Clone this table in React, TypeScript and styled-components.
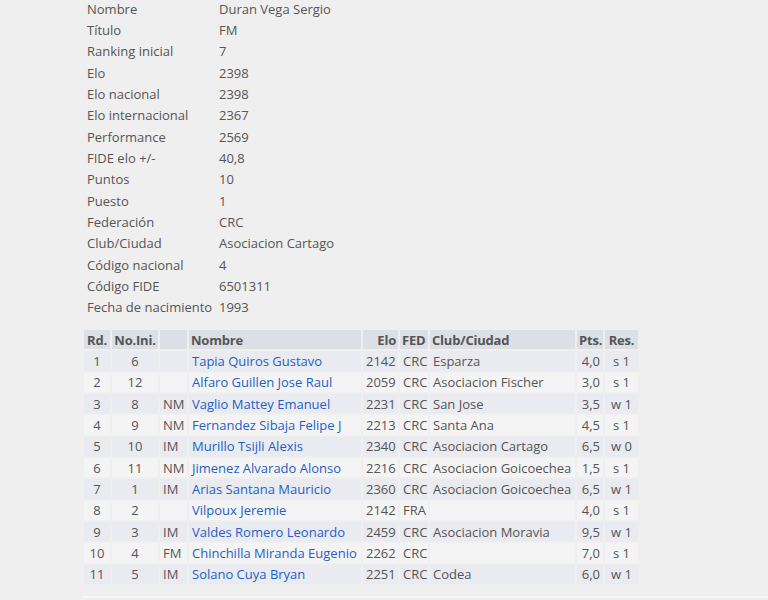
import { createGlobalStyle, styled } from "styled-components";

const GlobalStyle = createGlobalStyle`
  html, body {
    margin: 0;
    padding: 0;
    background: #efefef;
  }
  body {
    font-family: "Open Sans", "Liberation Sans", sans-serif;
    font-size: 13px;
    color: #555;
  }
`;

interface Info {
  label: string;
  value: string;
}

interface Game {
  rd: number;
  sno: number;
  title: string;
  name: string;
  elo: number;
  fed: string;
  club: string;
  pts: string;
  res: string;
}

type Align = "left" | "center" | "right";

interface Column {
  label: string;
  width: number;
  align: Align;
}

const info: Info[] = [
  { label: "Nombre", value: "Duran Vega Sergio" },
  { label: "Título", value: "FM" },
  { label: "Ranking inicial", value: "7" },
  { label: "Elo", value: "2398" },
  { label: "Elo nacional", value: "2398" },
  { label: "Elo internacional", value: "2367" },
  { label: "Performance", value: "2569" },
  { label: "FIDE elo +/-", value: "40,8" },
  { label: "Puntos", value: "10" },
  { label: "Puesto", value: "1" },
  { label: "Federación", value: "CRC" },
  { label: "Club/Ciudad", value: "Asociacion Cartago" },
  { label: "Código nacional", value: "4" },
  { label: "Código FIDE", value: "6501311" },
  { label: "Fecha de nacimiento", value: "1993" },
];

const columns: Column[] = [
  { label: "Rd.", width: 26, align: "center" },
  { label: "No.Ini.", width: 46, align: "center" },
  { label: "", width: 27, align: "left" },
  { label: "Nombre", width: 172, align: "left" },
  { label: "Elo", width: 35, align: "right" },
  { label: "FED", width: 28, align: "left" },
  { label: "Club/Ciudad", width: 145, align: "left" },
  { label: "Pts.", width: 26, align: "right" },
  { label: "Res.", width: 33, align: "center" },
];

const games: Game[] = [
  { rd: 1, sno: 6, title: "", name: "Tapia Quiros Gustavo", elo: 2142, fed: "CRC", club: "Esparza", pts: "4,0", res: "s 1" },
  { rd: 2, sno: 12, title: "", name: "Alfaro Guillen Jose Raul", elo: 2059, fed: "CRC", club: "Asociacion Fischer", pts: "3,0", res: "s 1" },
  { rd: 3, sno: 8, title: "NM", name: "Vaglio Mattey Emanuel", elo: 2231, fed: "CRC", club: "San Jose", pts: "3,5", res: "w 1" },
  { rd: 4, sno: 9, title: "NM", name: "Fernandez Sibaja Felipe J", elo: 2213, fed: "CRC", club: "Santa Ana", pts: "4,5", res: "s 1" },
  { rd: 5, sno: 10, title: "IM", name: "Murillo Tsijli Alexis", elo: 2340, fed: "CRC", club: "Asociacion Cartago", pts: "6,5", res: "w 0" },
  { rd: 6, sno: 11, title: "NM", name: "Jimenez Alvarado Alonso", elo: 2216, fed: "CRC", club: "Asociacion Goicoechea", pts: "1,5", res: "s 1" },
  { rd: 7, sno: 1, title: "IM", name: "Arias Santana Mauricio", elo: 2360, fed: "CRC", club: "Asociacion Goicoechea", pts: "6,5", res: "w 1" },
  { rd: 8, sno: 2, title: "", name: "Vilpoux Jeremie", elo: 2142, fed: "FRA", club: "", pts: "4,0", res: "s 1" },
  { rd: 9, sno: 3, title: "IM", name: "Valdes Romero Leonardo", elo: 2459, fed: "CRC", club: "Asociacion Moravia", pts: "9,5", res: "w 1" },
  { rd: 10, sno: 4, title: "FM", name: "Chinchilla Miranda Eugenio", elo: 2262, fed: "CRC", club: "", pts: "7,0", res: "s 1" },
  { rd: 11, sno: 5, title: "IM", name: "Solano Cuya Bryan", elo: 2251, fed: "CRC", club: "Codea", pts: "6,0", res: "w 1" },
];

const App = () => {
  return (
    <Page>
      <GlobalStyle />
      <InfoTable>
        <tbody>
          {info.map((row) => (
            <tr key={row.label}>
              <InfoLabel>{row.label}</InfoLabel>
              <InfoValue>{row.value}</InfoValue>
            </tr>
          ))}
        </tbody>
      </InfoTable>

      <GamesTable>
        <colgroup>
          {columns.map((c, i) => (
            <col key={i} style={{ width: c.width }} />
          ))}
        </colgroup>
        <thead>
          <tr>
            {columns.map((c, i) => (
              <Th key={i} $align={c.align}>
                {c.label}
              </Th>
            ))}
          </tr>
        </thead>
        <tbody>
          {games.map((g, i) => (
            <Row key={g.rd} $odd={i % 2 === 0}>
              <Td $align="center">{g.rd}</Td>
              <Td $align="center">{g.sno}</Td>
              <Td $align="left">{g.title}</Td>
              <Td $align="left">
                <PlayerLink href="#">{g.name}</PlayerLink>
              </Td>
              <Td $align="right">{g.elo}</Td>
              <Td $align="left">{g.fed}</Td>
              <Td $align="left">{g.club}</Td>
              <Td $align="right">{g.pts}</Td>
              <Td $align="center">{g.res}</Td>
            </Row>
          ))}
        </tbody>
      </GamesTable>
      <Footer />
    </Page>
  );
};

export default App;

const Page = styled.div`
  width: 768px;
  height: 600px;
  overflow: hidden;
  padding-left: 84px;
  box-sizing: border-box;
  margin-top: -2px;
`;

const InfoTable = styled.table`
  border-collapse: collapse;
  margin-bottom: 10px;

  td {
    height: 21.33px;
    padding: 0 3px;
    white-space: nowrap;
    vertical-align: middle;
  }
`;

const InfoLabel = styled.td`
  width: 126px;
`;

const InfoValue = styled.td``;

const GamesTable = styled.table`
  border-collapse: separate;
  border-spacing: 2px;
  table-layout: fixed;
  width: 558px;
  margin-left: -2px;
`;

const Th = styled.th<{ $align: Align }>`
  background: #dcdfe6;
  color: #555;
  font-weight: 700;
  letter-spacing: -0.2px;
  text-align: ${(p) => p.$align};
  height: 19.33px;
  padding: 0 2px;
  white-space: nowrap;
  overflow: visible;
`;

const Row = styled.tr<{ $odd: boolean }>`
  background: ${(p) => (p.$odd ? "#e9ebf0" : "#f4f4f5")};
`;

const Td = styled.td<{ $align: Align }>`
  text-align: ${(p) => p.$align};
  height: 19.33px;
  padding: 0 3px;
  white-space: nowrap;
`;

const PlayerLink = styled.a`
  color: #1f5fc8;
  text-decoration: none;
`;

const Footer = styled.div`
  margin-top: 10px;
  height: 20px;
  margin-left: -2px;
  background: #f6f6f6;
`;
